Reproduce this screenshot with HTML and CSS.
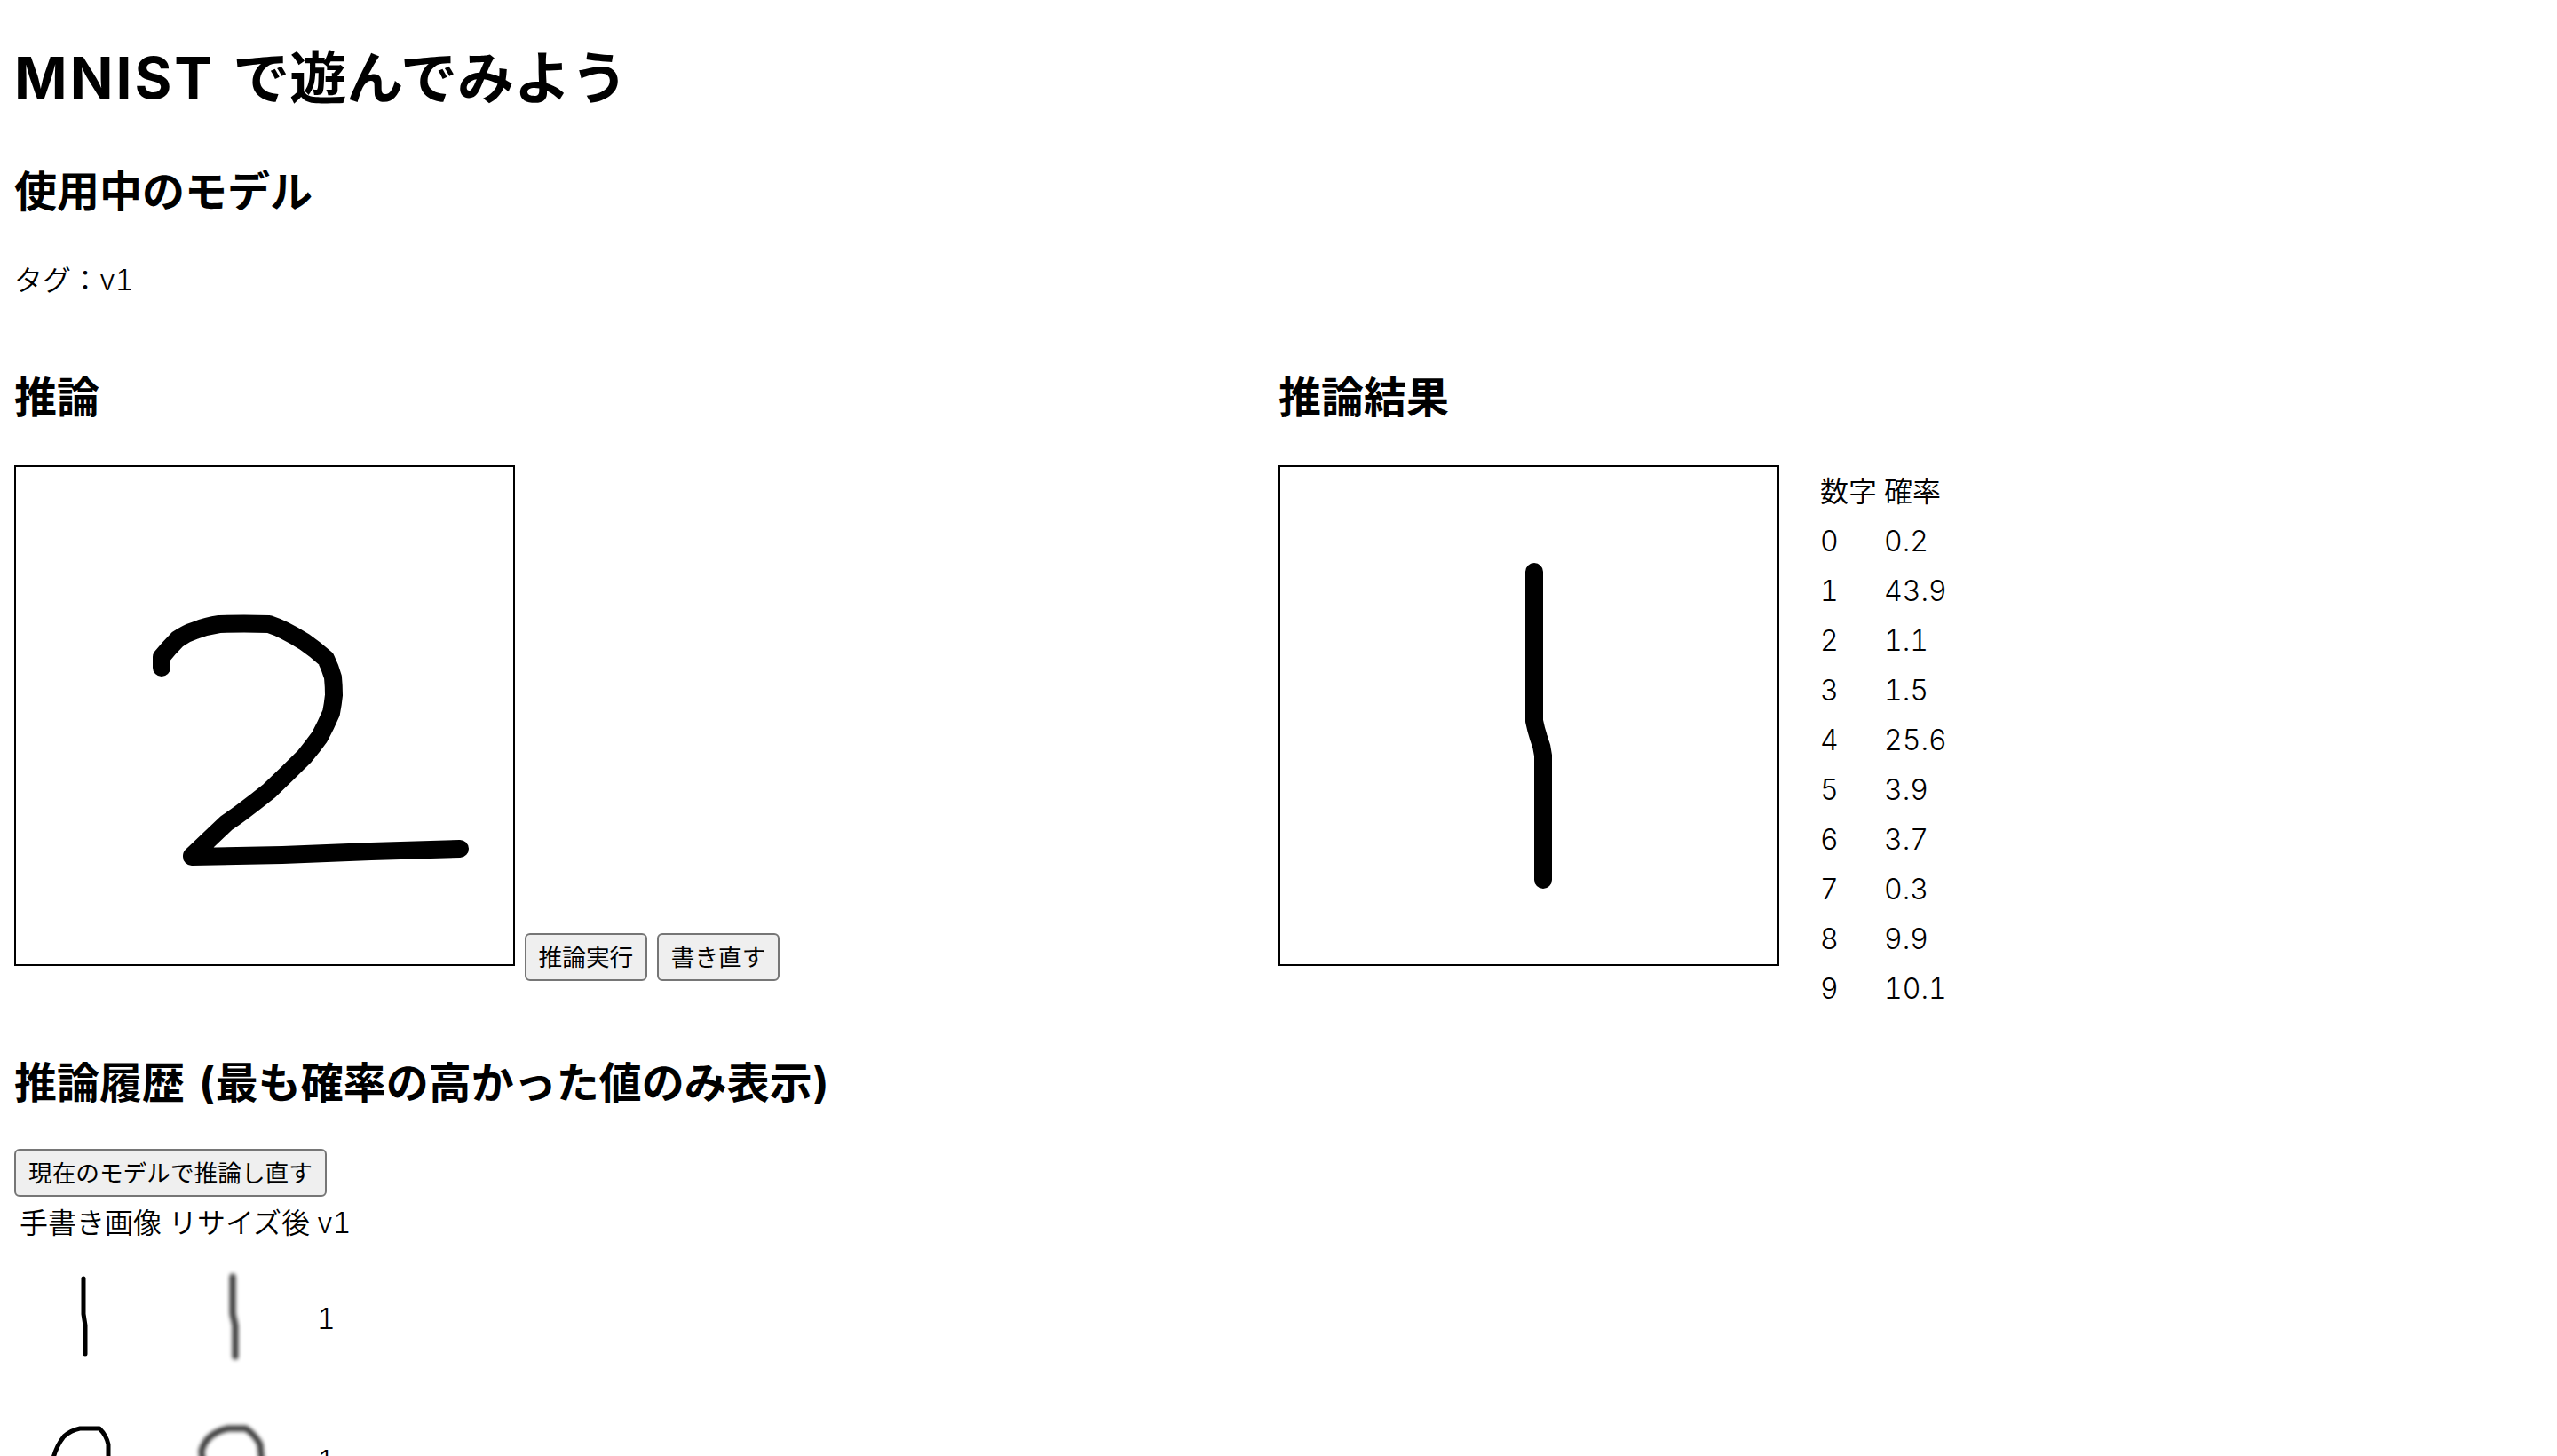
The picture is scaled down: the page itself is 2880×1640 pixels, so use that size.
FILE: index.html
```html
<!DOCTYPE html>
<html lang="ja">
<head>
    <meta charset="UTF-8">
    <title>MNIST で遊んでみよう</title>
    <link rel="stylesheet" href="styles.css">
</head>
<body>
    <h1><span class="latin">MNIST </span>で遊んでみよう</h1>

    <h2>使用中のモデル</h2>
    <p>タグ：v1</p>

    <div class="row">
        <div class="col">
            <h2>推論</h2>
            <div class="canvas-line">
                <svg class="canvas" viewBox="0 0 560 560">
                    <path class="stroke" d="M164 226 L164 214 Q172 204 182 194 Q192 187 202 184 Q215 179 229 177 Q257 176 285 177 Q294 180 302 184 Q314 190 325 197 Q338 206 349 216 Q354 226 357 237 Q358 247 358 257 Q357 267 355 277 Q349 291 342 304 Q334 315 325 326 Q305 346 285 365 Q270 377 254 389 Q246 395 237 401 Q217 420 198 438 L198 439 L300 437 L400 433 L500 430"/>
                </svg>
                <button class="btn-side">推論実行</button>
                <button class="btn-side">書き直す</button>
            </div>
        </div>
        <div class="col">
            <h2>推論結果</h2>
            <div class="result">
                <svg class="canvas" viewBox="0 0 560 560">
                    <path class="stroke" d="M286 118 L286 286 Q288 296 291 305 Q295 315 296 325 L296 465"/>
                </svg>
                <table class="probs">
                    <tr><td>数字</td><td>確率</td></tr>
                    <tr><td>0</td><td>0.2</td></tr>
                    <tr><td>1</td><td>43.9</td></tr>
                    <tr><td>2</td><td>1.1</td></tr>
                    <tr><td>3</td><td>1.5</td></tr>
                    <tr><td>4</td><td>25.6</td></tr>
                    <tr><td>5</td><td>3.9</td></tr>
                    <tr><td>6</td><td>3.7</td></tr>
                    <tr><td>7</td><td>0.3</td></tr>
                    <tr><td>8</td><td>9.9</td></tr>
                    <tr><td>9</td><td>10.1</td></tr>
                </table>
            </div>
        </div>
    </div>

    <h2 class="history-title">推論履歴 (最も確率の高かった値のみ表示)</h2>
    <button>現在のモデルで推論し直す</button>
    <table class="history">
        <tr><td>手書き画像</td><td>リサイズ後</td><td>v1</td></tr>
        <tr>
            <td><svg class="thumb" viewBox="0 0 140 140"><path class="thin" d="M72 30 L72 70 L74 83 L74 115"/></svg></td>
            <td><svg class="thumb resized" viewBox="0 0 140 140"><path class="thick" d="M72 28 L72 70 L75 83 L75 118"/></svg></td>
            <td>1</td>
        </tr>
        <tr>
            <td><svg class="thumb" viewBox="0 0 140 140"><path class="thin" d="M38 72 Q42 58 50 48 Q58 41 68 39 L90 39 Q98 47 100 57 L100 80 Q96 96 84 108 Q70 120 56 118 Q40 110 38 72"/></svg></td>
            <td><svg class="thumb resized" viewBox="0 0 140 140"><path class="thick" d="M37 64 Q40 54 47 48 Q56 41 67 39 L87 39 Q97 46 103 57 L105 80 Q100 96 88 108 Q72 120 56 118 Q40 110 37 64"/></svg></td>
            <td>1</td>
        </tr>
    </table>
</body>
</html>
```

FILE: styles.css
```css
body {
    margin: 16px;
    font-family: Inter, "Noto Sans CJK JP", sans-serif;
    font-size: 32px;
    font-weight: 350;
    font-variant-numeric: tabular-nums;
    line-height: 48px;
    color: #000;
    background-color: #fff;
}
h1 {
    font-size: 64px;
    font-weight: 700;
    line-height: 96px;
    margin: 0 0 44px;
    padding-top: 24px;
}
.latin {
    letter-spacing: 3px;
}
h2 {
    font-size: 48px;
    font-weight: 700;
    line-height: 72px;
    margin: 40px 0;
}
p {
    margin: 32px 0;
}
.row {
    display: flex;
}
.col {
    width: 1424px;
}
.col + .col {
    width: auto;
}
.canvas {
    width: 560px;
    height: 560px;
    border: 2px solid #000;
    display: inline-block;
}
.stroke {
    fill: none;
    stroke: #000;
    stroke-width: 20;
    stroke-linecap: round;
    stroke-linejoin: round;
}
.thin {
    fill: none;
    stroke: #000;
    stroke-width: 5;
    stroke-linecap: round;
    stroke-linejoin: round;
}
.thick {
    fill: none;
    stroke: #000;
    stroke-width: 7;
    stroke-linecap: round;
    stroke-linejoin: round;
}
button {
    font-family: inherit;
    font-size: 26.6667px;
    font-weight: 400;
    line-height: 40px;
    padding: 2px 14px;
    height: 54px;
    background-color: #efefef;
    border: 2px solid #767676;
    border-radius: 6px;
    color: #000;
}
.btn-side {
    margin-left: 2px;
}
.history-title {
    margin-bottom: 38px;
    word-spacing: 3px;
}
.result {
    display: flex;
    align-items: flex-start;
}
.probs {
    margin-left: 40px;
    border-spacing: 4px;
}
td {
    padding: 2px;
}
.history {
    border-spacing: 4px;
}
.thumb {
    width: 140px;
    height: 140px;
    display: block;
    margin-bottom: 12px;
}
.resized {
    filter: blur(2px);
    opacity: 0.75;
}
```
